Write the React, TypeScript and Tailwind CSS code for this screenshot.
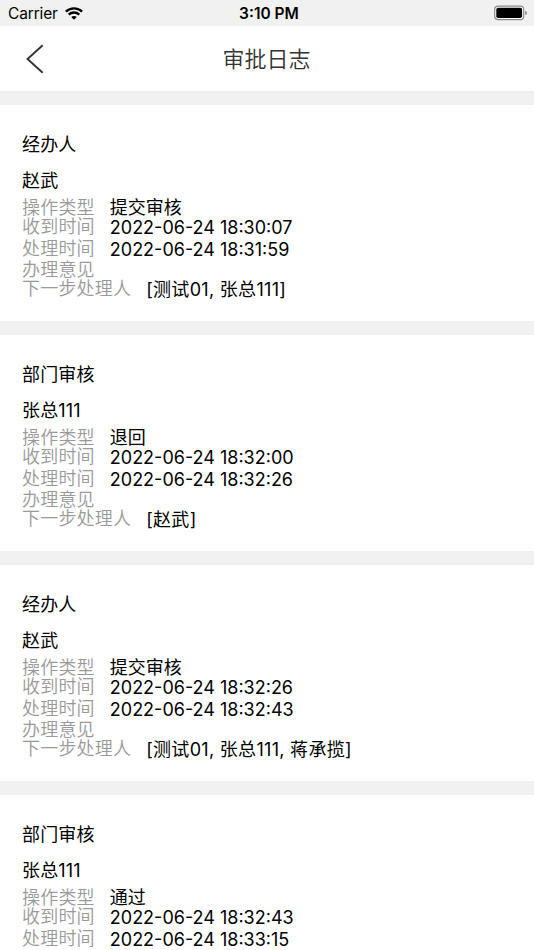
type LogEntry = {
  node: string;
  handler: string;
  action: string;
  receivedAt: string;
  handledAt: string;
  next?: string;
};

const logs: LogEntry[] = [
  {
    node: '经办人',
    handler: '赵武',
    action: '提交审核',
    receivedAt: '2022-06-24 18:30:07',
    handledAt: '2022-06-24 18:31:59',
    next: '[测试01, 张总111]',
  },
  {
    node: '部门审核',
    handler: '张总111',
    action: '退回',
    receivedAt: '2022-06-24 18:32:00',
    handledAt: '2022-06-24 18:32:26',
    next: '[赵武]',
  },
  {
    node: '经办人',
    handler: '赵武',
    action: '提交审核',
    receivedAt: '2022-06-24 18:32:26',
    handledAt: '2022-06-24 18:32:43',
    next: '[测试01, 张总111, 蒋承揽]',
  },
  {
    node: '部门审核',
    handler: '张总111',
    action: '通过',
    receivedAt: '2022-06-24 18:32:43',
    handledAt: '2022-06-24 18:33:15',
  },
];

function StatusBar() {
  return (
    <div className="grid h-[26px] shrink-0 grid-cols-3 items-center bg-[#f1f1f1] pt-0.5 pl-2 pr-1.5 text-black">
      <div className="flex items-center gap-[7px]">
        <span className="text-[15.5px] leading-6 tracking-[-0.15px]">Carrier</span>
        <svg className="-mt-0.5" width="18" height="13" viewBox="0 0 18 13" fill="none" stroke="currentColor" strokeWidth="2.3">
          <path d="M0.9 4.6C5.4 0.3 12.6 0.3 17.1 4.6" />
          <path d="M3.7 7.6C6.7 4.8 11.3 4.8 14.3 7.6" />
          <path d="M9 12.8L6.2 10C7.8 8.5 10.2 8.5 11.8 10Z" fill="currentColor" stroke="none" />
        </svg>
      </div>
      <span className="ml-0.5 text-center text-[15.5px] leading-6 font-semibold">3:10 PM</span>
      <svg className="-mt-0.5 justify-self-end" width="34" height="16" viewBox="0 0 34 16">
        <rect x="0.7" y="1.2" width="29" height="13.4" rx="3.4" fill="white" stroke="#8a8a8a" strokeWidth="1.2" />
        <rect x="2.3" y="2.8" width="25.8" height="10.2" rx="1.8" fill="black" />
        <path d="M31.3 5.7C33.3 6.3 33.3 9.5 31.3 10.1Z" fill="#777" />
      </svg>
    </div>
  );
}

function Row({ label, value, short }: { label: string; value?: string; short?: boolean }) {
  return (
    <div className={`flex items-center whitespace-nowrap ${short ? 'h-[18px]' : 'h-[22px]'}`}>
      <span className={`mr-[15px] font-[350] tracking-[0.2px] text-[#999] ${short ? '' : '-mt-0.5'}`}>{label}</span>
      <span>{value}</span>
    </div>
  );
}

function LogCard({ log }: { log: LogEntry }) {
  return (
    <section className="shrink-0 bg-white pt-[22px] pb-5 pl-[22px] text-[18px] leading-[22px] text-black">
      <h2 className="leading-9 tracking-[0.15px]">{log.node}</h2>
      <p className="leading-9 tracking-[0.15px]">{log.handler}</p>
      <Row label="操作类型" value={log.action} short />
      <Row label="收到时间" value={log.receivedAt} />
      <Row label="处理时间" value={log.handledAt} />
      {log.next && (
        <>
          <Row label="办理意见" short />
          <div className="tracking-[0.3px]">
            <Row label="下一步处理人" value={log.next} />
          </div>
        </>
      )}
    </section>
  );
}

export default function App() {
  return (
    <div className="flex h-[950px] w-[534px] flex-col overflow-hidden bg-[#f1f1f1] font-['Inter','Noto_Sans_CJK_SC',sans-serif]">
      <StatusBar />
      <header className="grid h-[65px] shrink-0 grid-cols-[1fr_auto_1fr] items-center bg-white text-[#333]">
        <svg className="ml-[26px]" width="18" height="30" viewBox="0 0 18 30" fill="none" stroke="currentColor" strokeWidth="1.9">
          <path d="M16.7 1.2L1.5 15L16.7 28.8" />
        </svg>
        <h1 className="mr-px text-[22px] leading-8 font-[350]">审批日志</h1>
      </header>
      <main className="mt-3.5 flex grow flex-col gap-3.5">
        {logs.map((log) => (
          <LogCard key={log.receivedAt} log={log} />
        ))}
      </main>
    </div>
  );
}
